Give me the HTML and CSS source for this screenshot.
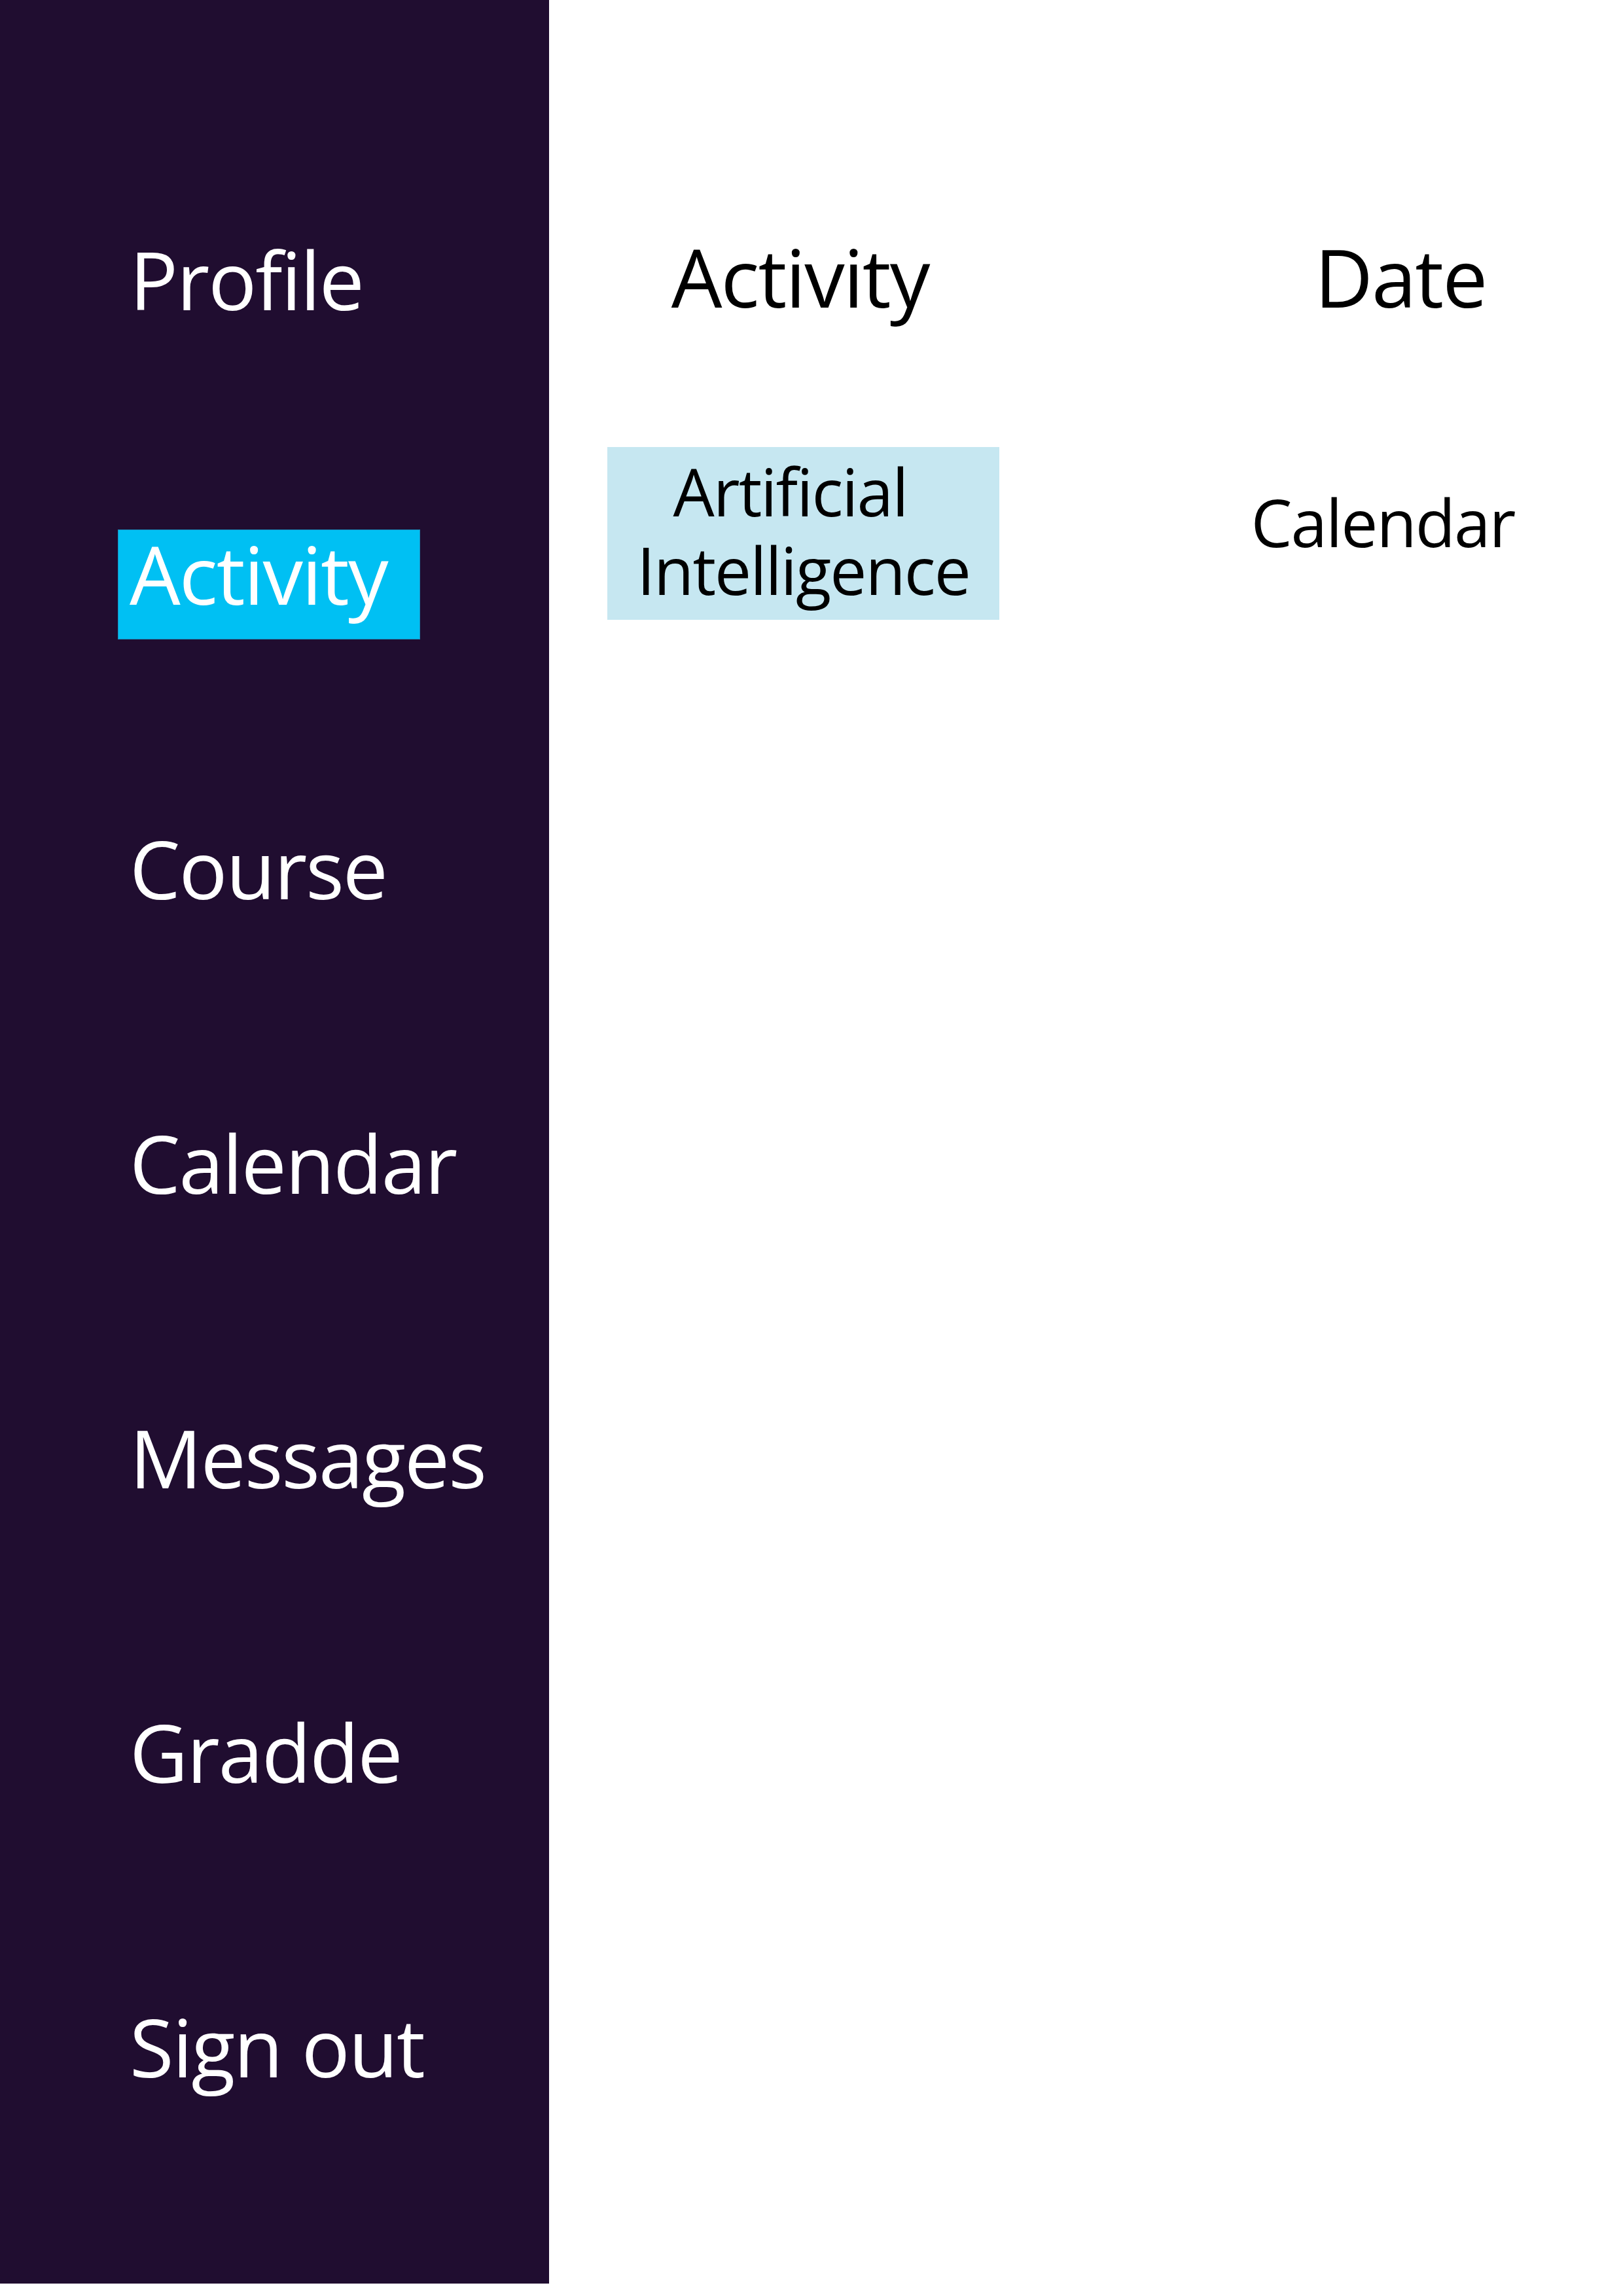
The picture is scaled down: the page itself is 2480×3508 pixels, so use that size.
FILE: index.html
```html
<!DOCTYPE html>
<html lang="en">
<head>
<meta charset="utf-8">
<title>Activity</title>
<link rel="stylesheet" href="styles.css">
</head>
<body>
<div class="page">
  <nav class="sidebar">
    <ul class="menu">
      <li class="menu-item"><span class="menu-label">Profile</span></li>
      <li class="menu-item"><span class="menu-label is-active">Activity</span></li>
      <li class="menu-item"><span class="menu-label">Course</span></li>
      <li class="menu-item"><span class="menu-label">Calendar</span></li>
      <li class="menu-item"><span class="menu-label">Messages</span></li>
      <li class="menu-item"><span class="menu-label">Gradde</span></li>
      <li class="menu-item"><span class="menu-label">Sign out</span></li>
    </ul>
  </nav>
  <main class="content">
    <div class="table">
      <div class="th th-activity">Activity</div>
      <div class="th th-date">Date</div>
      <div class="td td-activity">
        <div class="activity-chip">
          <span class="chip-line chip-line-first">Artificial</span>
          <span class="chip-line">Intelligence</span>
        </div>
      </div>
      <div class="td td-date">Calendar</div>
    </div>
  </main>
</div>
</body>
</html>
```
FILE: styles.css
```css
html, body {
  margin: 0;
  padding: 0;
  background: #ffffff;
}
body {
  font-family: "Open Sans", "Noto Sans", sans-serif;
  color: #000000;
}
.page {
  display: flex;
  align-items: flex-start;
}
.sidebar {
  width: 839px;
  height: 3489px;
  background: #200d30;
  box-sizing: border-box;
  padding: 359px 0 0 180px;
  flex: none;
}
.menu {
  list-style: none;
  margin: 0;
  padding: 0;
  display: flex;
  flex-direction: column;
  align-items: flex-start;
  gap: 282px;
}
.menu-item {
  display: block;
}
.menu-label {
  display: inline-block;
  font-size: 123px;
  line-height: 123px;
  color: #ffffff;
  padding: 6px 50px 39px 18px;
  letter-spacing: -2px;
}
.menu-label.is-active {
  background: #00c0f3;
  box-shadow: inset 0 0 0 1px #1a8fbf;
}
.content {
  flex: 1;
  padding: 361px 0 0 89px;
}
.table {
  display: grid;
  grid-template-columns: 599px 560px;
  column-gap: 306px;
  row-gap: 199px;
}
.th {
  font-size: 123px;
  line-height: 123px;
  text-align: center;
  letter-spacing: -2px;
}
.th-activity {
  padding-right: 10px;
}
.th-date {
  padding-left: 54px;
}
.td {
  font-size: 100px;
  line-height: 120px;
  text-align: center;
  letter-spacing: -2px;
}
.activity-chip {
  display: block;
  background: #c6e7f1;
  padding: 7px 0 17px;
}
.chip-line {
  display: block;
}
.chip-line-first {
  padding-right: 40px;
}
.td-date {
  padding-top: 54px;
}
```
